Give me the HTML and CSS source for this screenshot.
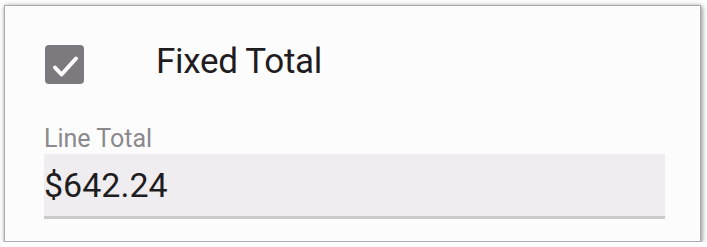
FILE: index.html
```html
<!DOCTYPE html>
<html lang="en">
<head>
  <meta charset="UTF-8">
  <title>Line Total</title>
  <link rel="stylesheet" href="styles.css">
</head>
<body>
  <div class="card">
    <label class="check-row">
      <span class="checkbox">
        <svg viewBox="0 0 39 39" width="39" height="39" aria-hidden="true">
          <path d="M10 22.5l6.5 7L31 13.5" fill="none" stroke="#fff" stroke-width="4" stroke-linecap="round" stroke-linejoin="round"/>
        </svg>
      </span>
      <span class="check-label">Fixed Total</span>
    </label>

    <div class="field">
      <div class="field-label">Line Total</div>
      <div class="field-input">$642.24</div>
    </div>
  </div>
</body>
</html>
```

FILE: styles.css
```css
body {
  margin: 0;
  background: #fff;
  font-family: Roboto, "Liberation Sans", sans-serif;
  color: #1f1d21;
}
.card {
  margin: 5px 0 0 4px;
  width: 697px;
  height: 237px;
  box-sizing: border-box;
  padding: 38px 0 0 39px;
  background: #fdfcfd;
  border: 1px solid #ababab;
  box-shadow: 1px 1px 5px rgba(0,0,0,0.5);
}
.check-row {
  display: flex;
  align-items: center;
  height: 40px;
}
.checkbox {
  width: 39px;
  height: 39px;
  margin-left: 1px;
  border-radius: 4px;
  background: #7c7a7e;
  display: flex;
}
.check-label {
  margin-left: 72px;
  font-size: 35px;
  line-height: 40px;
  margin-top: -4px;
  letter-spacing: -0.3px;
}
.field {
  margin-top: 40px;
  width: 621px;
}
.field-label {
  font-size: 25px;
  line-height: 30px;
  color: #8a898c;
}
.field-input {
  height: 62px;
  line-height: 62px;
  font-size: 34px;
  background: #efedf0;
  border-bottom: 3px solid #cbc9cc;
}
```
